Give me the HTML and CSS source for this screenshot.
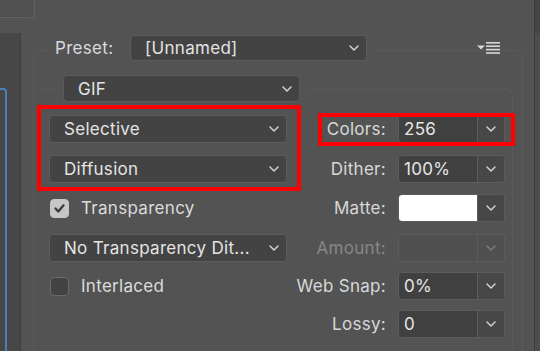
FILE: index.html
```html
<!DOCTYPE html>
<html>
<head>
<meta charset="utf-8">
<link rel="stylesheet" href="styles.css">
</head>
<body>
<div class="window">
  <aside class="side">
    <div class="tab"></div>
    <div class="panel"><div class="blue"></div></div>
  </aside>
  <main class="main">
    <div class="preset-row">
      <div class="legend legend-preset">
        <span class="label-preset">Preset:</span>
        <div class="select select-preset"><span>[Unnamed]</span><svg class="chev" viewBox="0 0 10 6"><polyline points="1,1 5,5 9,1"/></svg></div>
      </div>
      <svg class="menu" viewBox="0 0 23 12"><polygon points="0,3.5 8,3.5 4,7.5"/><rect x="9" y="0" width="14" height="1.6"/><rect x="9" y="3.4" width="14" height="1.6"/><rect x="9" y="6.8" width="14" height="1.6"/><rect x="9" y="10.2" width="14" height="1.6"/></svg>
    </div>
    <div class="group">
      <div class="legend legend-gif">
        <div class="select select-gif"><span>GIF</span><svg class="chev" viewBox="0 0 10 6"><polyline points="1,1 5,5 9,1"/></svg></div>
      </div>
      <div class="inner">
        <div class="grid">
          <div class="select select-wide"><span>Selective</span><svg class="chev" viewBox="0 0 10 6"><polyline points="1,1 5,5 9,1"/></svg></div>
          <div class="lbl">Colors:</div>
          <div class="combo"><div class="field">256</div><div class="btn"><svg class="chev" viewBox="0 0 10 6"><polyline points="1,1 5,5 9,1"/></svg></div></div>

          <div class="select select-wide"><span>Diffusion</span><svg class="chev" viewBox="0 0 10 6"><polyline points="1,1 5,5 9,1"/></svg></div>
          <div class="lbl">Dither:</div>
          <div class="combo"><div class="field">100%</div><div class="btn"><svg class="chev" viewBox="0 0 10 6"><polyline points="1,1 5,5 9,1"/></svg></div></div>

          <div class="check"><span class="box box-on"><svg viewBox="0 0 19 19"><polyline points="5,9.5 8.2,12.8 14,6"/></svg></span><span>Transparency</span></div>
          <div class="lbl">Matte:</div>
          <div class="combo"><div class="field field-white"></div><div class="btn"><svg class="chev" viewBox="0 0 10 6"><polyline points="1,1 5,5 9,1"/></svg></div></div>

          <div class="select select-wide"><span>No Transparency Dit...</span><svg class="chev" viewBox="0 0 10 6"><polyline points="1,1 5,5 9,1"/></svg></div>
          <div class="lbl lbl-off">Amount:</div>
          <div class="combo combo-off"><div class="field"></div><div class="btn"><svg class="chev" viewBox="0 0 10 6"><polyline points="1,1 5,5 9,1"/></svg></div></div>

          <div class="check"><span class="box"></span><span>Interlaced</span></div>
          <div class="lbl">Web Snap:</div>
          <div class="combo"><div class="field">0%</div><div class="btn"><svg class="chev" viewBox="0 0 10 6"><polyline points="1,1 5,5 9,1"/></svg></div></div>

          <div class="empty"></div>
          <div class="lbl">Lossy:</div>
          <div class="combo"><div class="field">0</div><div class="btn"><svg class="chev" viewBox="0 0 10 6"><polyline points="1,1 5,5 9,1"/></svg></div></div>
        </div>
      </div>
    </div>
  </main>
  <div class="edge"></div>
  <div class="mark mark-a"></div>
  <div class="mark mark-b"></div>
</div>
</body>
</html>
```
FILE: styles.css
```css
* { box-sizing: border-box; }
html, body { margin: 0; padding: 0; }
body {
  background: #535353;
  font-family: "Inter", "Noto Sans", sans-serif;
  font-size: 17px;
  letter-spacing: 0.3px;
  color: #dcdcdc;
  width: 540px;
  height: 351px;
  overflow: hidden;
}
.window {
  position: relative;
  display: grid;
  grid-template-columns: 21px 513px 6px;
  width: 540px;
  height: 351px;
  overflow: hidden;
}
.side { display: flex; flex-direction: column; height: 351px; }
.tab {
  width: 35px;
  height: 18px;
  flex: none;
  background: #515151;
  border-right: 1px solid #626262;
  border-bottom: 1px solid #626262;
  border-bottom-right-radius: 4px;
}
.panel {
  margin-top: 15px;
  flex: 1;
  background: #474747;
  border-right: 1px solid #3c3c3c;
  overflow: hidden;
}
.blue {
  margin-top: 55px;
  width: 7px;
  height: 300px;
  border-top: 2px solid #4a7fb8;
  border-right: 2px solid #4a7fb8;
  border-top-right-radius: 4px;
}
.main { padding: 35px 11px 0 12px; }
.preset-row {
  display: flex;
  align-items: center;
  height: 26px;
  margin-bottom: -11px;
  position: relative;
  z-index: 1;
}
.legend {
  display: flex;
  align-items: center;
  background: #535353;
  width: fit-content;
}
.legend-preset { margin-left: 15px; padding: 0 8px 0 7px; }
.label-preset { width: 75px; color: #dadada; }
.menu { width: 23px; height: 12px; margin-left: auto; margin-right: 23px; fill: #d6d6d6; }
.select {
  display: flex;
  align-items: center;
  justify-content: space-between;
  background: #434343;
  border: 1px solid #5c5c5c;
  border-radius: 4px;
  color: #e4e4e4;
  padding: 0 7px 0 14px;
}
.select-preset { width: 237px; height: 26px; }
.select-gif { width: 237px; height: 27px; }
.select-wide { width: 238px; height: 28px; }
.chev { width: 10px; height: 6px; fill: none; stroke: #d2d2d2; stroke-width: 1.5; stroke-linecap: round; stroke-linejoin: round; }
.group {
  border: 1px solid #5a5a5a;
  border-bottom: none;
  border-radius: 6px 6px 0 0;
  padding-top: 24px;
  height: 320px;
}
.legend-gif { margin-left: 21px; padding: 0 8px; margin-bottom: -13px; position: relative; z-index: 1; }
.inner {
  margin: 0 9px;
  border-top: 1px solid #5a5a5a;
  border-right: 1px solid #5a5a5a;
  border-top-right-radius: 6px;
  padding: 19px 0 0 6px;
  height: 260px;
}
.grid {
  display: grid;
  grid-template-columns: 238px 111px 107px;
  grid-template-rows: 40px 39px 40px 39px 38px 38px;
  align-items: center;
}
.lbl { text-align: right; padding-right: 12px; color: #d8d8d8; }
.lbl-off { color: #878787; }
.combo {
  display: flex;
  width: 107px;
  height: 28px;
  border: 1px solid #5c5c5c;
  border-radius: 4px;
  overflow: hidden;
}
.field {
  flex: 1;
  background: #404040;
  color: #e6e6e6;
  padding-left: 5px;
  display: flex;
  align-items: center;
}
.field-white { background: #ffffff; }
.btn {
  width: 27px;
  background: #474747;
  border-left: 1px solid #5c5c5c;
  display: flex;
  align-items: center;
  justify-content: center;
}
.combo-off .field { background: #505050; }
.combo-off .btn { background: #505050; }
.combo-off .chev { stroke: #7c7c7c; }
.check { display: flex; align-items: center; gap: 12px; padding-left: 1px; color: #dcdcdc; }
.box {
  width: 19px;
  height: 19px;
  border-radius: 4px;
  border: 1px solid #6a6a6a;
  background: #434343;
  display: block;
}
.box-on { background: #c6c6c6; border-color: #c6c6c6; }
.box svg { width: 17px; height: 17px; display: block; fill: none; stroke: #3a3a3a; stroke-width: 2.6; stroke-linecap: round; stroke-linejoin: round; }
.edge {
  border-left: 1px solid #3c3c3c;
  background: linear-gradient(#454545 0, #454545 33px, #4d4d4d 33px);
}
.mark { position: absolute; border: 4px solid #fe0000; }
.mark-a { left: 37px; top: 105px; width: 264px; height: 86px; }
.mark-b { left: 318px; top: 113px; width: 197px; height: 33px; }
```
